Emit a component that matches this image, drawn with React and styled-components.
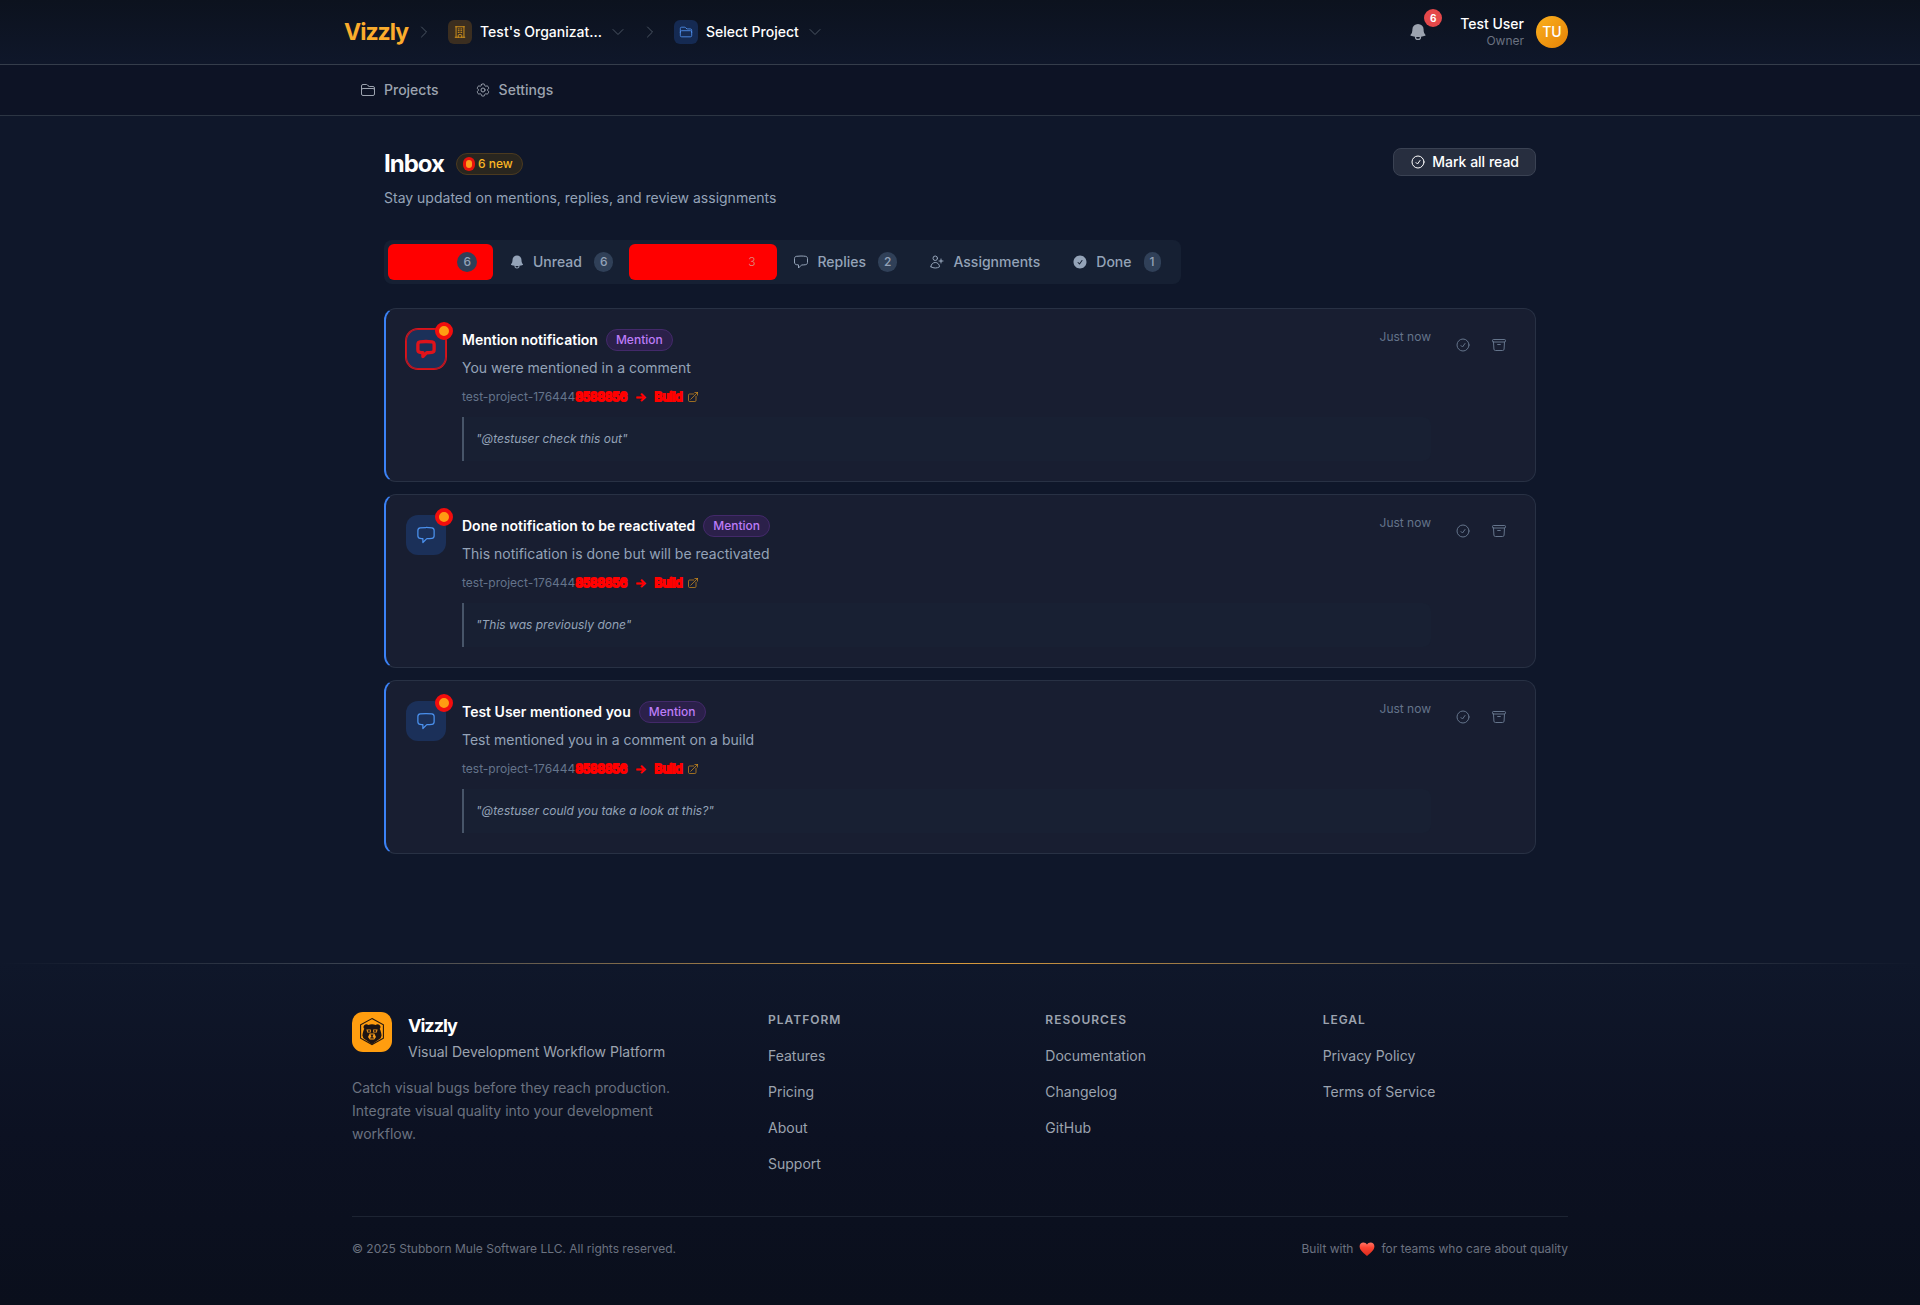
import React from "react";
import styled, { createGlobalStyle, css } from "styled-components";
import {
  HiOutlineChevronRight,
  HiOutlineChevronDown,
  HiOutlineBuildingOffice,
  HiOutlineFolder,
  HiOutlineCog6Tooth,
  HiOutlineCheckCircle,
  HiOutlineArchiveBox,
  HiOutlineChatBubbleLeft,
  HiOutlineUserPlus,
  HiOutlineArrowTopRightOnSquare,
  HiCheckCircle,
  HiBell,
} from "react-icons/hi2";

const GlobalStyle = createGlobalStyle`
  *, *::before, *::after { box-sizing: border-box; }
  body {
    margin: 0;
    background: #0f172a;
    color: #ffffff;
    font-family: Inter, "Liberation Sans", sans-serif;
    font-size: 14px;
    line-height: 20px;
    -webkit-font-smoothing: antialiased;
  }
  h1, h2, h3, p, ul, blockquote { margin: 0; padding: 0; }
  ul { list-style: none; }
  a { color: inherit; text-decoration: none; }
  button { font: inherit; color: inherit; background: none; border: 0; padding: 0; cursor: pointer; }
  svg { display: block; flex-shrink: 0; }
`;

const Header = styled.header`
  background: linear-gradient(180deg, #0c121e, #0f172a);
  border-bottom: 1px solid #353d4b;
`;

const Container = styled.div`
  max-width: 1280px;
  margin: 0 auto;
  padding: 0 24px;
`;

const HeaderBar = styled(Container)`
  display: flex;
  align-items: center;
  justify-content: space-between;
  height: 64px;
`;

const Crumbs = styled.nav`
  display: flex;
  align-items: center;
  gap: 8px;
  color: #4b5563;
`;

const Brand = styled.a`
  font-size: 23px;
  line-height: 32px;
  font-weight: 700;
  letter-spacing: -1px;
  color: #fbac2c;
`;

const CrumbButton = styled.button`
  display: flex;
  align-items: center;
  gap: 8px;
  padding: 6px 8px;
`;

const CrumbTile = styled.span`
  display: grid;
  place-items: center;
  width: 24px;
  height: 24px;
  border-radius: 6px;
  color: ${(p) => (p.$tone === "amber" ? "#e09c1c" : "#4f8fec")};
  background: ${(p) => (p.$tone === "amber" ? "#3b2e20" : "#152a52")};
`;

const CrumbName = styled.span`
  white-space: nowrap;
  font-weight: 500;
  color: #ffffff;
`;

const HeaderActions = styled.div`
  display: flex;
  align-items: center;
  gap: 16px;
`;

const BellButton = styled.button`
  position: relative;
  padding: 8px;
  color: #9ca3af;
`;

const BellCount = styled.span`
  position: absolute;
  top: -5px;
  right: -6px;
  width: 18px;
  height: 18px;
  border-radius: 9px;
  background: #e5484a;
  color: #ffffff;
  font-size: 10px;
  line-height: 18px;
  font-weight: 700;
  text-align: center;
`;

const Profile = styled.button`
  display: flex;
  align-items: center;
  gap: 12px;
  padding: 0 8px;
  text-align: right;
`;

const ProfileName = styled.span`
  display: block;
  line-height: 18px;
  font-weight: 500;
`;

const ProfileRole = styled.span`
  display: block;
  font-size: 12px;
  line-height: 16px;
  color: #6b7280;
`;

const Avatar = styled.span`
  width: 32px;
  height: 32px;
  border-radius: 16px;
  background: linear-gradient(135deg, #fbb01e, #e58206);
  line-height: 32px;
  font-weight: 500;
  text-align: center;
`;

const SubNav = styled.nav`
  background: #0d1325;
  border-bottom: 1px solid #2c3543;
`;

const SubNavBar = styled(Container)`
  display: flex;
  gap: 4px;
`;

const SubNavLink = styled.a`
  display: flex;
  align-items: center;
  gap: 8px;
  height: 50px;
  padding: 0 16px;
  font-weight: 500;
  color: #9ca3af;
`;

const Main = styled.main`
  max-width: 1216px;
  margin: 0 auto;
  padding: 32px;
`;

const PageHead = styled.div`
  display: flex;
  align-items: flex-start;
  justify-content: space-between;
  margin-bottom: 32px;
`;

const TitleRow = styled.div`
  display: flex;
  align-items: center;
  gap: 12px;
  margin-bottom: 8px;
`;

const Title = styled.h1`
  font-size: 24px;
  line-height: 32px;
  font-weight: 700;
  letter-spacing: -1px;
`;

const pill = css`
  display: flex;
  align-items: center;
  height: 22px;
  border: 1px solid;
  border-radius: 11px;
  padding: 0 9px;
  font-size: 12px;
  line-height: 16px;
  font-weight: 500;
`;

const NewPill = styled.span`
  ${pill}
  gap: 6px;
  color: #fbb724;
  background: #29261f;
  border-color: #4b3a1f;
`;

const NewDot = styled.span`
  width: 6px;
  height: 8px;
  border-radius: 3px;
  background: #ff9d1c;
  box-shadow: 0 0 0 3px #e8130c;
`;

const Subtitle = styled.p`
  color: #94a3b8;
`;

const MarkAll = styled.button`
  display: flex;
  align-items: center;
  gap: 6px;
  height: 28px;
  padding: 0 16px;
  border: 1px solid #3a4253;
  border-radius: 8px;
  background: #272e3f;
  font-weight: 500;
`;

const Tabs = styled.div`
  display: flex;
  width: fit-content;
  margin-bottom: 24px;
  padding: 4px;
  border-radius: 8px;
  background: #162033;
`;

const Tab = styled.button`
  display: flex;
  align-items: center;
  gap: 8px;
  height: 36px;
  padding: 0 16px;
  border-radius: 6px;
  font-weight: 500;
  color: #94a3b8;
`;

const BlockTab = styled(Tab)`
  justify-content: flex-end;
  width: ${(p) => p.$width}px;
  background: #ff0000;
`;

const Count = styled.span`
  margin-left: 4px;
  padding: 0 6px;
  border-radius: 10px;
  background: ${(p) => (p.$bare ? "transparent" : "#304058")};
  color: ${(p) => (p.$bare ? "#e08a80" : "#94a3b8")};
  font-size: 12px;
  font-weight: ${(p) => (p.$bare ? 300 : 500)};
  line-height: 20px;
`;

const List = styled.ul`
  display: flex;
  flex-direction: column;
  gap: 12px;
`;

const Card = styled.li`
  display: flex;
  align-items: flex-start;
  gap: 16px;
  padding: 20px;
  border: 1px solid #283144;
  border-left: 2px solid #3b82f6;
  border-radius: 12px;
  background: #181e31;
`;

const KindTile = styled.span`
  position: relative;
  display: grid;
  place-items: center;
  width: 40px;
  height: 40px;
  border-radius: 12px;
  background: #1b3059;
  color: #4b91ee;
  ${(p) =>
    p.$flagged &&
    css`
      color: #e0131b;
      box-shadow: inset 0 0 0 1px #c9141c, 0 0 0 1px #d8141c;
      svg {
        stroke-width: 4;
      }
    `}
`;

const UnreadDot = styled.span`
  position: absolute;
  top: -7px;
  right: -7px;
  width: 18px;
  height: 18px;
  border: 4px solid #f20d0d;
  border-radius: 9px;
  background: #ff9c12;
`;

const CardBody = styled.div`
  flex: 1;
  min-width: 0;
`;

const CardHead = styled.div`
  display: flex;
  align-items: flex-start;
  justify-content: space-between;
`;

const CardTitleRow = styled.div`
  display: flex;
  align-items: center;
  gap: 8px;
  margin-bottom: 6px;
`;

const CardTitle = styled.h2`
  font-size: 14px;
  line-height: 22px;
  font-weight: 600;
`;

const KindPill = styled.span`
  ${pill}
  color: #bd7cf8;
  background: #2b204a;
  border-color: #43296a;
`;

const CardText = styled.p`
  margin-bottom: 10px;
  line-height: 22px;
  color: #94a3b8;
`;

const Meta = styled.div`
  display: flex;
  align-items: center;
  gap: 8px;
  margin-bottom: 12px;
  font-size: 12px;
  line-height: 16px;
  color: #64748b;
`;

const Struck = styled.span`
  color: #ff0000;
  -webkit-text-stroke: ${(p) => (p.$light ? 1 : 2)}px #ff0000;
`;

const BuildLink = styled.a`
  display: flex;
  align-items: center;
  gap: 4px;
  color: #c98a1e;
`;

const Time = styled.time`
  font-size: 12px;
  line-height: 16px;
  color: #64748b;
`;

const Quote = styled.blockquote`
  padding: 12px;
  border-left: 2px solid #475569;
  border-radius: 0 8px 8px 0;
  background: #182033;
  font-size: 12px;
  line-height: 20px;
  font-style: italic;
  color: #94a3b8;
`;

const CardActions = styled.div`
  display: flex;
  gap: 4px;
`;

const IconButton = styled.button`
  padding: 8px;
  color: #64748b;
`;

const Footer = styled.footer`
  margin-top: 77px;
  background: linear-gradient(180deg, #0f172a, #0c1122 50%, #0a0f1c);
`;

const FooterRule = styled.div`
  height: 1px;
  background: linear-gradient(90deg, transparent, #3f4754 20%, #d89a3c 50%, #3f4754 80%, transparent);
`;

const FooterInner = styled.div`
  max-width: 1280px;
  margin: 0 auto;
  padding: 48px 32px;
`;

const FooterGrid = styled.div`
  display: grid;
  grid-template-columns: 384px 1fr;
  gap: 32px;
  margin-bottom: 40px;
`;

const FooterBrand = styled.div`
  display: flex;
  gap: 16px;
  margin-bottom: 12px;
`;

const FooterName = styled.h2`
  font-size: 18px;
  line-height: 28px;
  font-weight: 700;
  letter-spacing: -1px;
`;

const FooterTagline = styled.p`
  line-height: 24px;
  color: #9ca3af;
`;

const FooterText = styled.p`
  max-width: 320px;
  line-height: 23px;
  color: #6b7280;
`;

const FooterColumns = styled.div`
  display: grid;
  grid-template-columns: repeat(3, 1fr);
  gap: 32px;
`;

const ColumnTitle = styled.h3`
  margin-bottom: 16px;
  font-size: 12px;
  line-height: 16px;
  font-weight: 600;
  letter-spacing: 1px;
  text-transform: uppercase;
  color: #9ca3af;
`;

const ColumnLinks = styled.ul`
  display: flex;
  flex-direction: column;
  gap: 12px;
  line-height: 24px;
  color: #9ca3af;
`;

const FooterBottom = styled.div`
  display: flex;
  align-items: center;
  justify-content: space-between;
  padding-top: 24px;
  border-top: 1px solid #1d2433;
  font-size: 12px;
  line-height: 16px;
  color: #6b7280;
`;

const BuiltWith = styled.p`
  display: flex;
  align-items: center;
  gap: 6px;
`;

function BearLogo() {
  return (
    <svg width="40" height="40" viewBox="0 0 40 40" role="img" aria-label="Vizzly bear">
      <rect width="40" height="40" rx="11" fill="#ff9d0f" />
      <path d="M20 6.6 31.4 12.8v13.4L20 32.6 8.6 26.2V12.8z" fill="none" stroke="#24170f" strokeWidth="1.1" />
      <path
        d="M12 13.4c1.400-1.500 3.400-1.300 4.200-.5 2.400-.8 5.200-.8 7.600 0 .8-.8 2.800-1 4.200.5.9 1.200.5 2.600-.3 3.400.9 1.600 1.600 4 1.900 6.600l-1 2.800L20 32.200l-8.600-6-1-2.800c.3-2.600 1-5 1.900-6.600-.8-.8-1.200-2.200-.3-3.400z"
        fill="#1c1414"
      />
      <path d="M14.400 17.600h4.400v2.900h-3.600zM21.200 17.600h4.400l-.8 2.900h-3.600z" fill="#f49a1b" />
      <path d="M15.800 18.300h2.200v1.400h-2.200zM22 18.300h2.200v1.400H22z" fill="#1c1414" />
      <path d="M17.700 21.600h4.600l1.700 3.400-1.800 2.400h-4.400L16 25z" fill="#f49a1b" />
      <path d="M18.400 22.500h3.200l-.9 1.700v1.300h1.100v.9h-3.600v-.9h1.100v-1.300z" fill="#1c1414" />
    </svg>
  );
}

function Heart() {
  return (
    <svg width="16" height="14" viewBox="0 0 16 14" role="img" aria-label="love">
      <defs>
        <linearGradient id="heart" x1="0" y1="0" x2="0" y2="1">
          <stop offset="0" stopColor="#ff7566" />
          <stop offset="0.4" stopColor="#fb4331" />
          <stop offset="1" stopColor="#d92a1c" />
        </linearGradient>
      </defs>
      <path
        d="M8 14C6 11.700.6 8.600.6 4.400.6 2 2.300.4 4.400.4 6 .4 7.300 1.200 8 2.500 8.700 1.200 10 .4 11.600.4c2.100 0 3.800 1.600 3.800 4C15.400 8.600 10 11.700 8 14z"
        fill="url(#heart)"
      />
    </svg>
  );
}

const notifications = [
  {
    title: "Mention notification",
    text: "You were mentioned in a comment",
    quote: '"@testuser check this out"',
    flagged: true,
  },
  {
    title: "Done notification to be reactivated",
    text: "This notification is done but will be reactivated",
    quote: '"This was previously done"',
  },
  {
    title: "Test User mentioned you",
    text: "Test mentioned you in a comment on a build",
    quote: '"@testuser could you take a look at this?"',
  },
];

const footerColumns = [
  { title: "Platform", links: ["Features", "Pricing", "About", "Support"] },
  { title: "Resources", links: ["Documentation", "Changelog", "GitHub"] },
  { title: "Legal", links: ["Privacy Policy", "Terms of Service"] },
];

function Notification({ title, text, quote, flagged }) {
  return (
    <Card>
      <KindTile $flagged={flagged}>
        <HiOutlineChatBubbleLeft size={20} />
        <UnreadDot />
      </KindTile>
      <CardBody>
        <CardHead>
          <div>
            <CardTitleRow>
              <CardTitle>{title}</CardTitle>
              <KindPill>Mention</KindPill>
            </CardTitleRow>
            <CardText>{text}</CardText>
            <Meta>
              <span>
                test-project-176444<Struck>8588856</Struck>
              </span>
              <Struck $light>→</Struck>
              <BuildLink href="#build">
                <Struck>Build</Struck>
                <HiOutlineArrowTopRightOnSquare size={12} />
              </BuildLink>
            </Meta>
          </div>
          <Time>Just now</Time>
        </CardHead>
        <Quote>{quote}</Quote>
      </CardBody>
      <CardActions>
        <IconButton aria-label="Mark as read">
          <HiOutlineCheckCircle size={16} />
        </IconButton>
        <IconButton aria-label="Archive">
          <HiOutlineArchiveBox size={16} />
        </IconButton>
      </CardActions>
    </Card>
  );
}

export default function App() {
  return (
    <>
      <GlobalStyle />
      <Header>
        <HeaderBar>
          <Crumbs>
            <Brand href="#home">Vizzly</Brand>
            <HiOutlineChevronRight size={16} />
            <CrumbButton>
              <CrumbTile $tone="amber">
                <HiOutlineBuildingOffice size={14} />
              </CrumbTile>
              <CrumbName>Test's Organizat...</CrumbName>
              <HiOutlineChevronDown size={16} />
            </CrumbButton>
            <HiOutlineChevronRight size={16} />
            <CrumbButton>
              <CrumbTile $tone="blue">
                <HiOutlineFolder size={14} />
              </CrumbTile>
              <CrumbName>Select Project</CrumbName>
              <HiOutlineChevronDown size={16} />
            </CrumbButton>
          </Crumbs>
          <HeaderActions>
            <BellButton aria-label="Notifications">
              <HiBell size={20} />
              <BellCount>6</BellCount>
            </BellButton>
            <Profile>
              <span>
                <ProfileName>Test User</ProfileName>
                <ProfileRole>Owner</ProfileRole>
              </span>
              <Avatar>TU</Avatar>
            </Profile>
          </HeaderActions>
        </HeaderBar>
      </Header>
      <SubNav>
        <SubNavBar>
          <SubNavLink href="#projects">
            <HiOutlineFolder size={16} />
            Projects
          </SubNavLink>
          <SubNavLink href="#settings">
            <HiOutlineCog6Tooth size={16} />
            Settings
          </SubNavLink>
        </SubNavBar>
      </SubNav>
      <Main>
        <PageHead>
          <div>
            <TitleRow>
              <Title>Inbox</Title>
              <NewPill>
                <NewDot />6 new
              </NewPill>
            </TitleRow>
            <Subtitle>Stay updated on mentions, replies, and review assignments</Subtitle>
          </div>
          <MarkAll>
            <HiOutlineCheckCircle size={16} />
            Mark all read
          </MarkAll>
        </PageHead>
        <Tabs>
          <BlockTab $width={105}>
            <Count>6</Count>
          </BlockTab>
          <Tab>
            <HiBell size={16} />
            Unread
            <Count>6</Count>
          </Tab>
          <BlockTab $width={148}>
            <Count $bare>3</Count>
          </BlockTab>
          <Tab>
            <HiOutlineChatBubbleLeft size={16} />
            Replies
            <Count>2</Count>
          </Tab>
          <Tab>
            <HiOutlineUserPlus size={16} />
            Assignments
          </Tab>
          <Tab>
            <HiCheckCircle size={16} />
            Done
            <Count>1</Count>
          </Tab>
        </Tabs>
        <List>
          {notifications.map((n) => (
            <Notification key={n.title} {...n} />
          ))}
        </List>
      </Main>
      <Footer>
        <FooterRule />
        <FooterInner>
          <FooterGrid>
            <div>
              <FooterBrand>
                <BearLogo />
                <div>
                  <FooterName>Vizzly</FooterName>
                  <FooterTagline>Visual Development Workflow Platform</FooterTagline>
                </div>
              </FooterBrand>
              <FooterText>
                Catch visual bugs before they reach production. Integrate visual quality into your development workflow.
              </FooterText>
            </div>
            <FooterColumns>
              {footerColumns.map((c) => (
                <div key={c.title}>
                  <ColumnTitle>{c.title}</ColumnTitle>
                  <ColumnLinks>
                    {c.links.map((l) => (
                      <li key={l}>
                        <a href="#footer">{l}</a>
                      </li>
                    ))}
                  </ColumnLinks>
                </div>
              ))}
            </FooterColumns>
          </FooterGrid>
          <FooterBottom>
            <p>© 2025 Stubborn Mule Software LLC. All rights reserved.</p>
            <BuiltWith>
              Built with
              <Heart />
              for teams who care about quality
            </BuiltWith>
          </FooterBottom>
        </FooterInner>
      </Footer>
    </>
  );
}
